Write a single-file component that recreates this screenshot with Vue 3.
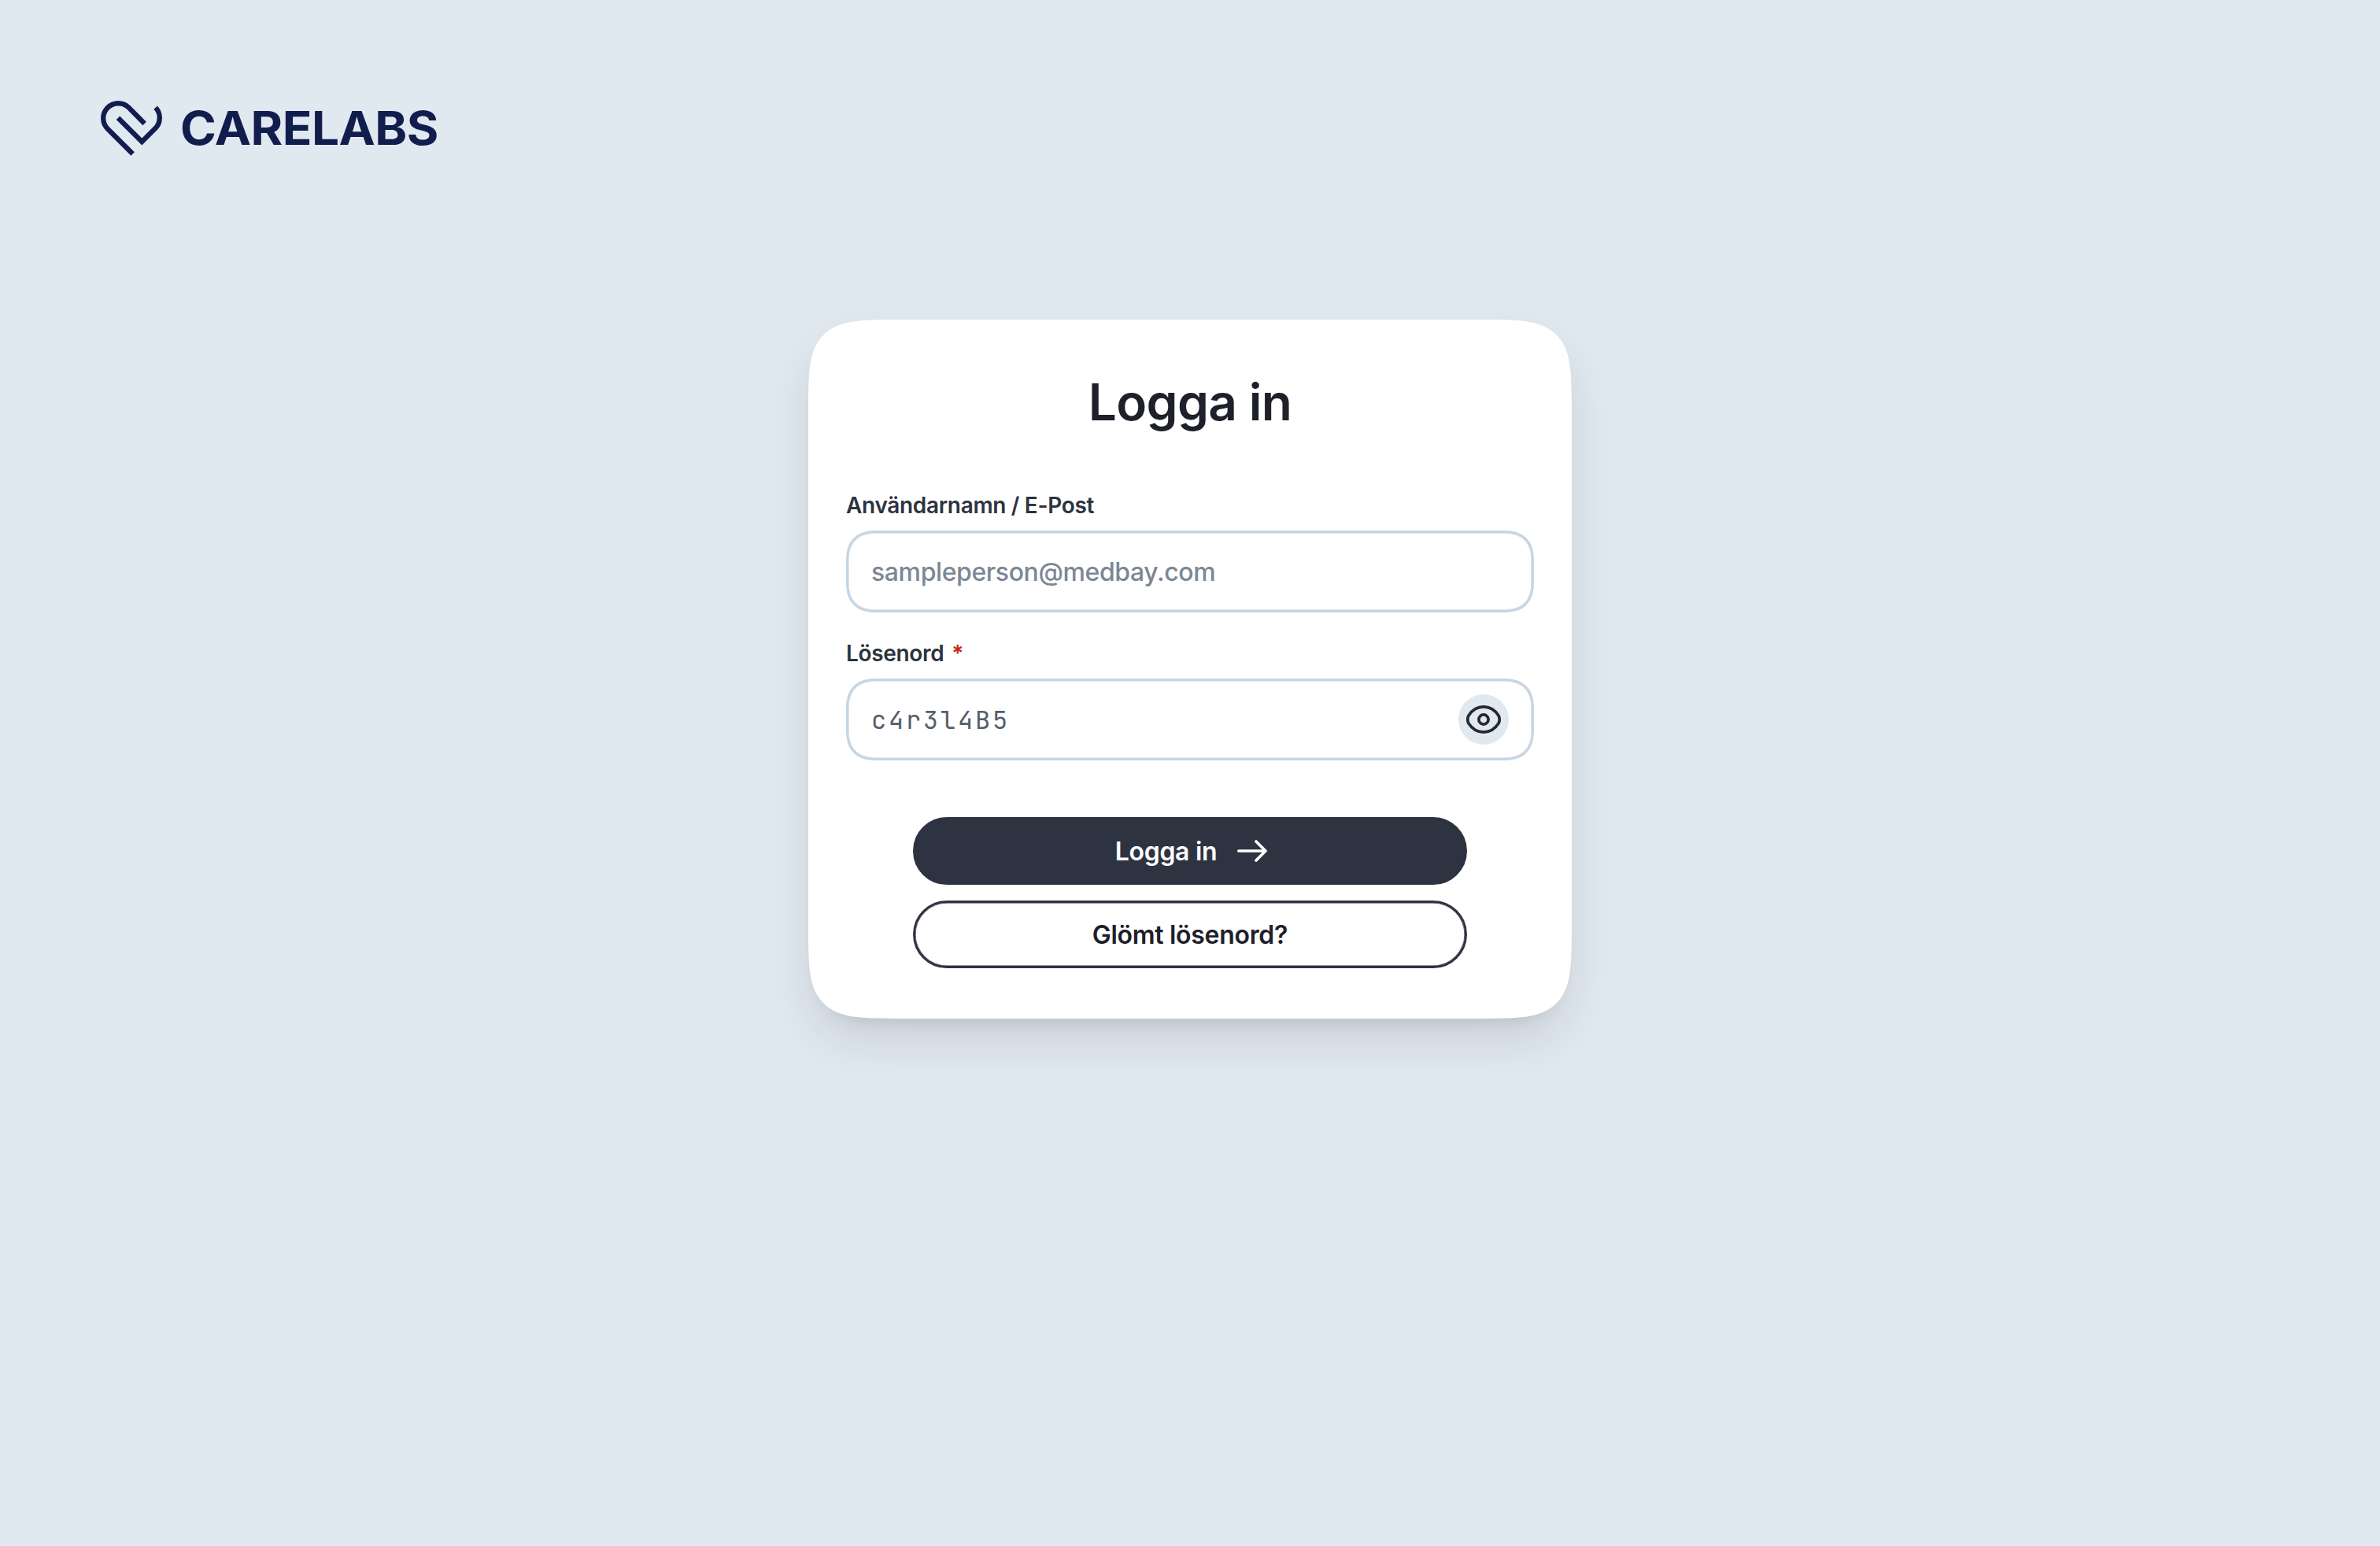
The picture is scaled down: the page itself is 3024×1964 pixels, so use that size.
<template>
  <div class="page">
    <header class="header">
      <a class="logo">
        <svg class="logo-mark" viewBox="54 39 234 210" fill="none" stroke="currentColor" stroke-width="19">
          <path d="M221 126 L160.3 64.7 A57 57 0 0 0 79.7 145.3 L176 241.6" />
          <path d="M120 104 L211 195 L261.3 144.7 A57 57 0 0 0 263 65" />
        </svg>
        <span class="logo-text">CARELABS</span>
      </a>
    </header>

    <main class="content">
      <form class="card" @submit.prevent>
        <h1 class="title">Logga in</h1>

        <div class="field">
          <label class="label" for="username">Användarnamn / E-Post</label>
          <div class="control">
            <input
              id="username"
              v-model="username"
              class="input"
              type="text"
              placeholder="sampleperson@medbay.com"
              spellcheck="false"
            />
          </div>
        </div>

        <div class="field">
          <label class="label" for="password">Lösenord <span class="required">*</span></label>
          <div class="control">
            <input
              id="password"
              v-model="password"
              class="input password"
              :type="showPassword ? 'text' : 'password'"
              spellcheck="false"
            />
            <button type="button" class="toggle" @click="showPassword = !showPassword">
              <svg viewBox="0 0 44 36" fill="none" stroke="currentColor" stroke-width="3.7">
                <path d="M22 1.9 C12.5 1.9 6.8 7.2 3 13 C1.4 15.6 1.4 20.4 3 23 C6.8 28.8 12.5 34.1 22 34.1 C31.5 34.1 37.2 28.8 41 23 C42.6 20.4 42.6 15.6 41 13 C37.2 7.2 31.5 1.9 22 1.9 Z" />
                <circle cx="22" cy="18" r="6.1" />
              </svg>
            </button>
          </div>
        </div>

        <div class="actions">
          <button type="submit" class="btn primary">
            <span>Logga in</span>
            <svg class="arrow" viewBox="0 0 38 28" fill="none" stroke="currentColor" stroke-width="3.6" stroke-linecap="round" stroke-linejoin="round">
              <path d="M1.8 14 H36 M24 2 L36 14 L24 26" />
            </svg>
          </button>
          <button type="button" class="btn secondary">Glömt lösenord?</button>
        </div>
      </form>
    </main>
  </div>
</template>

<script setup>
import { ref } from 'vue'

const username = ref('')
const password = ref('c4r3l4B5')
const showPassword = ref(true)
</script>

<style>
body {
  margin: 0;
  background: #e1e9f0;
}
</style>

<style scoped>
.page {
  min-height: 1964px;
  box-sizing: border-box;
  background: #e1e9f0;
  font-family: Inter, "Liberation Sans", sans-serif;
  color: #2d3340;
}

.header {
  display: flex;
  height: 406px;
  box-sizing: border-box;
  padding: 128px;
}

.logo {
  display: flex;
  align-items: flex-start;
  gap: 23px;
  height: 70px;
  color: #111e4d;
}

.logo-mark {
  width: 78px;
  height: 70px;
}

.logo-text {
  font-size: 59px;
  font-weight: 700;
  line-height: 70px;
  letter-spacing: -0.5px;
  transform: scaleX(1.052);
  transform-origin: left;
}

.content {
  display: flex;
  justify-content: center;
}

.card {
  display: flex;
  flex-direction: column;
  box-sizing: border-box;
  width: 970px;
  height: 888px;
  padding: 65px 48px;
  background: white;
  border-radius: 122px;
  corner-shape: squircle;
  box-shadow: 0 30px 60px rgba(0, 0, 0, 0.1), 0 16px 20px -12px rgba(0, 0, 0, 0.09);
}

.title {
  margin: 0 0 75px;
  font-size: 64px;
  font-weight: 600;
  line-height: 80px;
  letter-spacing: -0.7px;
  text-align: center;
  color: #1e202a;
}

.field {
  display: flex;
  flex-direction: column;
  gap: 16px;
  margin-bottom: 36px;
}

.label {
  height: 32px;
  font-size: 28px;
  font-weight: 600;
  line-height: 32px;
  letter-spacing: -0.32px;
}

.required {
  margin-left: 3px;
  color: #c02b1d;
}

.control {
  display: flex;
  align-items: center;
  box-sizing: border-box;
  height: 104px;
  padding: 0 29px;
  border: 3px solid #c6d5e3;
  border-radius: 40px;
  corner-shape: superellipse(1.35);
  box-shadow: inset 0 0 0 0.5px #c6d5e3;
}

.input {
  flex: 1;
  min-width: 0;
  height: 60px;
  padding: 0;
  border: none;
  outline: none;
  background: none;
  font-family: inherit;
  font-size: 32px;
  font-weight: 450;
  letter-spacing: -0.4px;
  color: #565e6c;
}

.input::placeholder {
  color: #7c8795;
  opacity: 1;
}

.input.password {
  font-family: "JetBrains Mono", "DejaVu Sans Mono", monospace;
  letter-spacing: 2.8px;
}

.toggle {
  display: flex;
  align-items: center;
  justify-content: center;
  width: 64px;
  height: 64px;
  padding: 0;
  border: none;
  border-radius: 50%;
  background: #e1e9f0;
  color: #252833;
  cursor: pointer;
}

.toggle svg {
  width: 44px;
  height: 36px;
}

.actions {
  display: flex;
  flex-direction: column;
  align-items: center;
  gap: 20px;
  margin-top: 36px;
}

.btn {
  display: flex;
  align-items: center;
  justify-content: center;
  gap: 26px;
  box-sizing: border-box;
  width: 704px;
  height: 86px;
  padding: 0;
  border: 3px solid #2d3340;
  border-radius: 43px;
  box-shadow: inset 0 0 0 0.5px #2d3340;
  font-family: inherit;
  font-size: 32px;
  font-weight: 600;
  letter-spacing: -0.3px;
  cursor: pointer;
}

.primary {
  padding-left: 3px;
  background: #2d3340;
  color: white;
}

.secondary {
  background: white;
  color: #1e202a;
}

.arrow {
  width: 38px;
  height: 28px;
}
</style>
